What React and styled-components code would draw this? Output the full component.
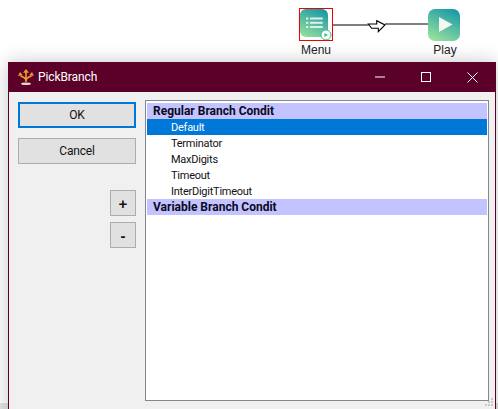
import React from "react";
import styled, { createGlobalStyle } from "styled-components";

const Global = createGlobalStyle`
  html, body { margin: 0; padding: 0; background: #fff; overflow: hidden; }
  #root { width: 498px; height: 409px; }
`;

const Canvas = styled.div`
  position: relative;
  width: 498px;
  height: 409px;
  overflow: hidden;
  background: #fff;
  font-family: "Roboto", "Open Sans", sans-serif;
`;

const StatusStrip = styled.div`
  position: absolute;
  left: 0;
  right: 0;
  bottom: 0;
  height: 6px;
  background: #e4e4e4;
`;

const Wire = styled.svg`
  position: absolute;
  left: 330px;
  top: 14px;
`;

const Node = styled.div`
  position: absolute;
  left: ${(p) => p.$x}px;
  top: ${(p) => p.$y}px;
  width: ${(p) => p.$w}px;
`;

const NodeIcon = styled.svg`
  display: block;
`;

const NodeLabel = styled.span`
  position: absolute;
  top: 34px;
  left: -10px;
  right: -10px;
  text-align: center;
  font-family: "Liberation Sans", sans-serif;
  font-size: 12px;
  line-height: 14px;
  color: #222;
`;

const Selection = styled.div`
  position: absolute;
  left: 299px;
  top: 8px;
  width: 32px;
  height: 31px;
  border: 1px solid #f00000;
  pointer-events: none;
`;

const Window = styled.section`
  position: absolute;
  left: 8px;
  top: 62px;
  width: 488px;
  height: 360px;
  box-sizing: border-box;
  border: 1px solid #5a0029;
  border-top: none;
  background: #f0f0f0;
  box-shadow: 0 0 18px rgba(0, 0, 0, 0.22);
  display: flex;
  flex-direction: column;
`;

const TitleBar = styled.header`
  height: 30px;
  flex: none;
  background: #5a0029;
  display: flex;
  align-items: center;
  padding-left: 9px;
  color: #fff;
`;

const Title = styled.span`
  font-family: "Roboto", sans-serif;
  font-size: 12px;
  margin-left: 4px;
  letter-spacing: -0.1px;
`;

const WindowControls = styled.div`
  margin-left: auto;
  display: flex;
  align-items: center;
  height: 100%;
`;

const ControlButton = styled.div`
  width: 46px;
  height: 100%;
  display: flex;
  align-items: center;
  justify-content: center;
`;

const Body = styled.div`
  flex: 1;
  display: flex;
  align-items: flex-start;
  padding: 8px 6px 0 9px;
  position: relative;
`;

const ButtonColumn = styled.div`
  width: 118px;
  flex: none;
  display: flex;
  flex-direction: column;
  margin: 2px 9px 0 0;
`;

const ActionButton = styled.button`
  box-sizing: border-box;
  width: 118px;
  height: 26px;
  margin: 0 0 10px;
  padding: 0 0 1px;
  background: #e1e1e1;
  border: ${(p) => (p.$primary ? "2px solid #0078d7" : "1px solid #adadad")};
  border-radius: 0;
  font-family: "Roboto", sans-serif;
  font-size: 12px;
  letter-spacing: -0.2px;
  color: #111;
`;

const StepperGroup = styled.div`
  align-self: flex-end;
  display: flex;
  flex-direction: column;
  gap: 6px;
  margin-top: 16px;
`;

const StepButton = styled.button`
  box-sizing: border-box;
  width: 26px;
  height: 26px;
  padding: 0;
  background: #e1e1e1;
  border: 1px solid #adadad;
  border-radius: 0;
  font-family: "Liberation Sans", sans-serif;
  font-size: 15px;
  font-weight: 700;
  color: #111;
`;

const ListBox = styled.div`
  box-sizing: border-box;
  width: 344px;
  height: 301px;
  flex: none;
  background: #fff;
  border: 1px solid #828790;
  padding: 2px 1px 0;
  font-family: "Roboto", sans-serif;
`;

const GroupRow = styled.div`
  height: 16px;
  line-height: 16px;
  background: #c3c3ff;
  color: #0a0a1e;
  font-size: 12px;
  font-weight: 700;
  padding-left: 6px;
  white-space: nowrap;
  overflow: hidden;
`;

const ItemRow = styled.div`
  height: 16px;
  line-height: 17px;
  font-size: 11px;
  letter-spacing: -0.25px;
  padding-left: 24px;
  background: ${(p) => (p.$selected ? "#0078d7" : "transparent")};
  color: ${(p) => (p.$selected ? "#fff" : "#111")};
`;

const Grip = styled.svg`
  position: absolute;
  right: 1px;
  bottom: 14px;
`;

const MenuIcon = () => (
  <NodeIcon width="32" height="32" viewBox="0 0 32 32">
    <defs>
      <linearGradient id="nodeA" x1="0.75" y1="0" x2="0.25" y2="1">
        <stop offset="0" stopColor="#1c9aa5" />
        <stop offset="1" stopColor="#8fdc9c" />
      </linearGradient>
    </defs>
    <rect x="0" y="0" width="28" height="28" rx="6" fill="url(#nodeA)" />
    <g fill="#dcefe9">
      <rect x="6" y="8.5" width="2.4" height="2" />
      <rect x="6" y="12.8" width="2.4" height="2" />
      <rect x="6" y="17" width="2.4" height="2" />
      <rect x="10" y="8.5" width="12.7" height="2" />
      <rect x="10" y="12.8" width="12.7" height="2" />
      <rect x="10" y="17" width="12.7" height="2" />
    </g>
    <circle cx="26" cy="26" r="5" fill="#fff" stroke="#3cbf8f" strokeWidth="1" />
    <path d="M24.4 24l3.6 2-3.6 2z" fill="#3cbf8f" />
  </NodeIcon>
);

const PlayIcon = () => (
  <NodeIcon width="32" height="32" viewBox="0 0 32 32">
    <defs>
      <linearGradient id="nodeB" x1="0.75" y1="0" x2="0.25" y2="1">
        <stop offset="0" stopColor="#1c9aa8" />
        <stop offset="1" stopColor="#97e09c" />
      </linearGradient>
    </defs>
    <rect width="32" height="32" rx="7" fill="url(#nodeB)" />
    <path d="M11 8L24.5 15.5 11 23z" fill="#f4f8f5" />
  </NodeIcon>
);

const BranchIcon = () => (
  <svg width="16" height="17" viewBox="0 0 16 17" fill="none">
    <g stroke="#ee9a2c" strokeWidth="1.6">
      <path d="M8 13V3" />
      <path d="M2.5 6.5C4 8.5 8 8 8 11.5" />
      <path d="M13.5 6.5C12 8.5 8 8 8 11.5" />
    </g>
    <g fill="#ee9a2c">
      <path d="M8 0l3 3.8H5z" />
      <path d="M0 7l2-4 2.6 3z" />
      <path d="M16 7l-2-4-2.6 3z" />
    </g>
    <ellipse cx="8" cy="14.8" rx="5" ry="1.2" fill="#e6d6c8" />
  </svg>
);

const items = ["Terminator", "MaxDigits", "Timeout", "InterDigitTimeout"];

export default function App() {
  return (
    <Canvas>
      <Global />
      <StatusStrip />
      <Wire width="110" height="24" viewBox="0 0 110 24">
        <path d="M3 11H38.5M55 10H100" stroke="#000" strokeWidth="1.2" fill="none" />
        <path d="M38.3 10h8.4V6.7l8.3 4.3-6.7 6.7v-3.4h-6.6z" fill="#fff" stroke="#000" strokeWidth="1.1" />
      </Wire>
      <Node $x={300} $y={9} $w={32}>
        <MenuIcon />
        <NodeLabel>Menu</NodeLabel>
      </Node>
      <Selection />
      <Node $x={428} $y={9} $w={34}>
        <PlayIcon />
        <NodeLabel>Play</NodeLabel>
      </Node>
      <Window>
        <TitleBar>
          <BranchIcon />
          <Title>PickBranch</Title>
          <WindowControls>
            <ControlButton>
              <svg width="10" height="2" viewBox="0 0 10 2"><rect y="0.5" width="10" height="1" fill="#fff" /></svg>
            </ControlButton>
            <ControlButton>
              <svg width="10" height="10" viewBox="0 0 10 10"><rect x="0.5" y="0.5" width="9" height="9" fill="none" stroke="#fff" /></svg>
            </ControlButton>
            <ControlButton>
              <svg width="11" height="11" viewBox="0 0 11 11"><path d="M.5.5l10 10M10.5.5l-10 10" stroke="#fff" fill="none" /></svg>
            </ControlButton>
          </WindowControls>
        </TitleBar>
        <Body>
          <ButtonColumn>
            <ActionButton $primary>OK</ActionButton>
            <ActionButton>Cancel</ActionButton>
            <StepperGroup>
              <StepButton>+</StepButton>
              <StepButton>-</StepButton>
            </StepperGroup>
          </ButtonColumn>
          <ListBox>
            <GroupRow>Regular Branch Condit</GroupRow>
            <ItemRow $selected>Default</ItemRow>
            {items.map((t) => (
              <ItemRow key={t}>{t}</ItemRow>
            ))}
            <GroupRow>Variable Branch Condit</GroupRow>
          </ListBox>
          <Grip width="9" height="9" viewBox="0 0 9 9" fill="#c8c8c8">
            <rect x="6" y="0" width="2" height="2" />
            <rect x="3" y="3" width="2" height="2" />
            <rect x="6" y="3" width="2" height="2" />
            <rect x="0" y="6" width="2" height="2" />
            <rect x="3" y="6" width="2" height="2" />
            <rect x="6" y="6" width="2" height="2" />
          </Grip>
        </Body>
      </Window>
    </Canvas>
  );
}
